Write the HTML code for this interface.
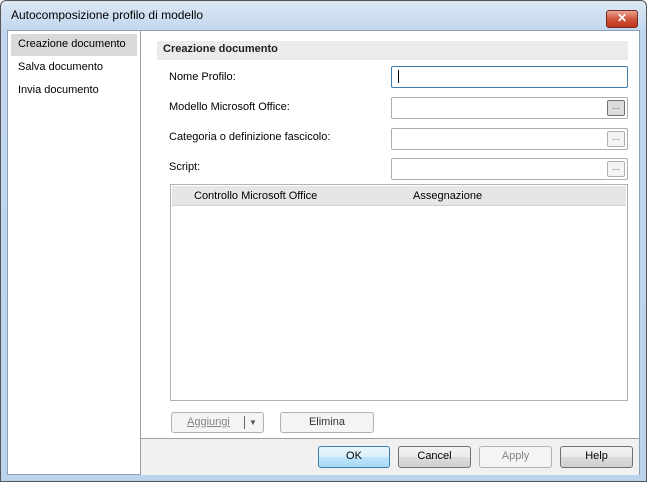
<html><head><style>
body{margin:0;width:647px;height:482px;overflow:hidden;font-family:"Liberation Sans",sans-serif;font-size:11px;color:#000;}
.win{position:absolute;left:0;top:0;width:645px;height:480px;border:1px solid #555;border-radius:6px 6px 0 0;background:linear-gradient(#dbe7f4,#c2d7ee 30px,#bcd3ec);}
.a{position:absolute}
.client{position:absolute;left:6px;top:29px;width:631px;height:443px;background:#fff;border:1px solid #8da0b8;}
.btn{position:absolute;height:20px;border:1px solid #707070;border-radius:3px;background:linear-gradient(#f2f2f2,#ebebeb 50%,#dddddd 51%,#cfcfcf);text-align:center;line-height:19px;font-size:11px}
.dis{border-color:#adb2b5;background:#f4f4f4;color:#838383}
.inp{position:absolute;left:383px;width:235px;height:20px;border:1px solid #abadb3;background:#fff;border-radius:2px}
.dot{position:absolute;right:2px;top:2px;width:16px;height:14px;border:1px solid #adb2b5;border-radius:2px;background:#f4f4f4;font-size:9px;line-height:10px;text-align:center;color:#555}
.lab{position:absolute;left:161px}
</style></head><body>
<div class="win">
<div class="a" style="left:10px;top:7px;font-size:12px;color:#000">Autocomposizione profilo di modello</div>
<div class="a" style="left:605px;top:9px;width:30px;height:16px;border:1px solid #6d2b21;border-radius:3px;background:linear-gradient(#e8a592,#d0553c 50%,#c0341c);color:#fff;text-align:center;font-weight:bold;font-size:12px;line-height:15px">✕</div>
<div class="client">
 <div class="a" style="left:0;top:0;width:132px;height:443px;border-right:1px solid #a0a0a0;background:#fff"></div>
 <div class="a" style="left:3px;top:3px;width:126px;height:22px;background:#d9d9d9"></div>
 <div class="a" style="left:10px;top:7px">Creazione documento</div>
 <div class="a" style="left:10px;top:30px">Salva documento</div>
 <div class="a" style="left:10px;top:53px">Invia documento</div>
 <div class="a" style="left:133px;top:0;width:498px;height:407px;background:#fff"></div>
 <div class="a" style="left:149px;top:10px;width:471px;height:19px;background:#ebebeb"></div>
 <div class="a" style="left:155px;top:12px;font-weight:bold;color:#222">Creazione documento</div>
 <div class="lab" style="top:40px">Nome Profilo:</div>
 <div class="inp" style="top:35px;border-color:#3d7bad"><div class="a" style="left:6px;top:3px;width:1px;height:13px;background:#000"></div></div>
 <div class="lab" style="top:70px">Modello Microsoft Office:</div>
 <div class="inp" style="top:66px"><div class="dot" style="border-color:#707070;background:#ddd">...</div></div>
 <div class="lab" style="top:100px">Categoria o definizione fascicolo:</div>
 <div class="inp" style="top:97px"><div class="dot">...</div></div>
 <div class="lab" style="top:130px">Script:</div>
 <div class="inp" style="top:127px"><div class="dot">...</div></div>
 <div class="a" style="left:162px;top:153px;width:456px;height:215px;border:1px solid #adb2b5;background:#fff">
  <div class="a" style="left:1px;top:1px;width:454px;height:19px;background:#e6e6e6;border-bottom:1px solid #d0d0d0"></div>
  <div class="a" style="left:23px;top:5px">Controllo Microsoft Office</div>
  <div class="a" style="left:242px;top:5px">Assegnazione</div>
 </div>
 <div class="btn dis" style="left:163px;top:381px;width:91px;height:19px;line-height:19px"><span style="position:absolute;left:15px;text-decoration:underline">Aggiungi</span><span style="position:absolute;left:72px;top:3px;width:1px;height:13px;background:#666"></span><span style="position:absolute;left:77px;top:0;font-size:8px;color:#555">▼</span></div>
 <div class="btn dis" style="left:272px;top:381px;width:92px;height:19px;line-height:19px;color:#333">Elimina</div>
 <div class="a" style="left:133px;top:407px;width:498px;height:36px;background:#f0f0f0;border-top:1px solid #a0a0a0"></div>
 <div class="btn" style="left:310px;top:415px;width:70px;border-color:#3c7fb1;background:linear-gradient(#eaf6fd,#d9f0fc 50%,#bee6fd 51%,#a7d9f5)">OK</div>
 <div class="btn" style="left:390px;top:415px;width:71px">Cancel</div>
 <div class="btn dis" style="left:471px;top:415px;width:71px">Apply</div>
 <div class="btn" style="left:552px;top:415px;width:71px">Help</div>
</div>
</div>
</body></html>
